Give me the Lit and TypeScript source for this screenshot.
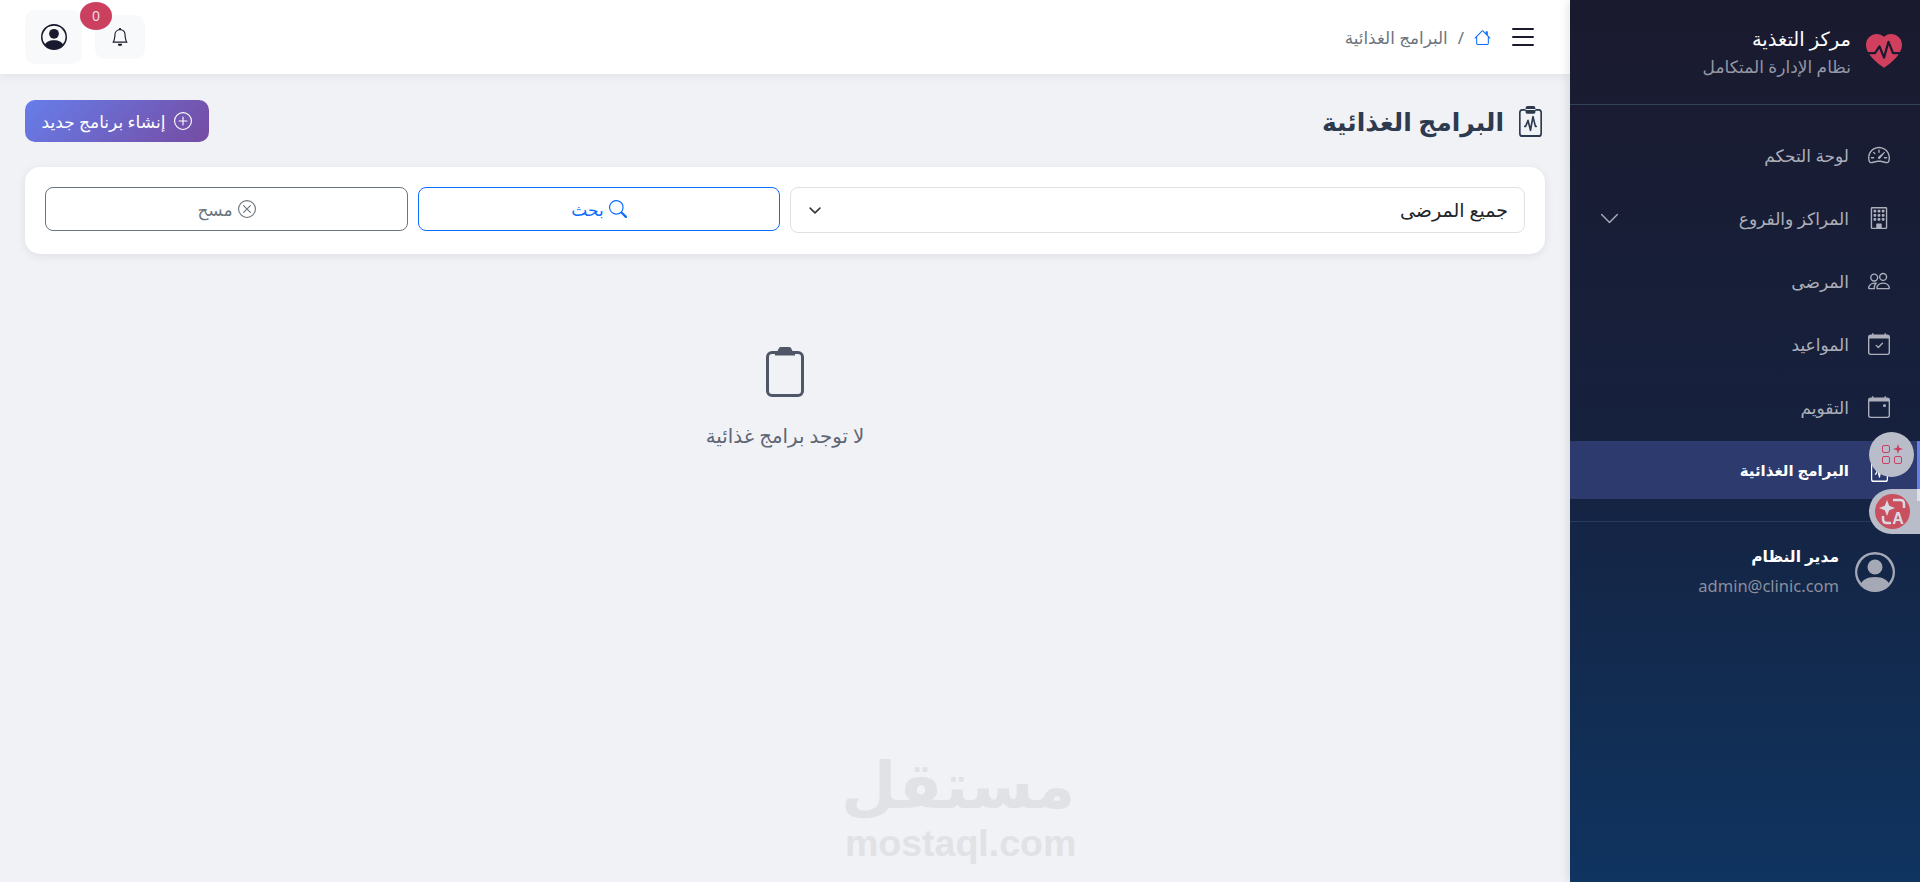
import { LitElement, html, css, svg, unsafeCSS } from "lit";
import { customElement } from "lit/decorators.js";

const icon = (paths: string[], cls = "") => html`<svg class="bi ${cls}" viewBox="0 0 16 16" fill="currentColor" aria-hidden="true">${paths.map((d) => svg`<path fill-rule="evenodd" d=${d}></path>`)}</svg>`;
const narrow = (paths: string[], cls = "") => html`<svg class="narrow ${cls}" viewBox="1 0 14 16" preserveAspectRatio="none" fill="currentColor" aria-hidden="true">${paths.map((d) => svg`<path fill-rule="evenodd" d=${d}></path>`)}</svg>`;

const FRAME = "M3.5 0a.5.5 0 0 1 .5.5V1h8V.5a.5.5 0 0 1 1 0V1h1a2 2 0 0 1 2 2v11a2 2 0 0 1-2 2H2a2 2 0 0 1-2-2V3a2 2 0 0 1 2-2h1V.5a.5.5 0 0 1 .5-.5M1 4v10a1 1 0 0 0 1 1h12a1 1 0 0 0 1-1V4z";
const I = {
  list: ["M2.5 12a.5.5 0 0 1 .5-.5h10a.5.5 0 0 1 0 1H3a.5.5 0 0 1-.5-.5m0-4a.5.5 0 0 1 .5-.5h10a.5.5 0 0 1 0 1H3a.5.5 0 0 1-.5-.5m0-4a.5.5 0 0 1 .5-.5h10a.5.5 0 0 1 0 1H3a.5.5 0 0 1-.5-.5"],
  person: ["M11 6a3 3 0 1 1-6 0 3 3 0 0 1 6 0", "M0 8a8 8 0 1 1 16 0A8 8 0 0 1 0 8m8-7a7 7 0 0 0-5.468 11.37C3.242 11.226 4.805 10 8 10s4.757 1.225 5.468 2.37A7 7 0 0 0 8 1"],
  bell: ["M8 16a2 2 0 0 0 2-2H6a2 2 0 0 0 2 2M8 1.918l-.797.161A4 4 0 0 0 4 6c0 .628-.134 2.197-.459 3.742-.16.767-.376 1.566-.663 2.258h10.244c-.287-.692-.502-1.49-.663-2.258C12.134 8.197 12 6.628 12 6a4 4 0 0 0-3.203-3.92zM14.22 12c.223.447.481.801.78 1H1c.299-.199.557-.553.78-1C2.68 10.2 3 6.88 3 6c0-2.42 1.72-4.44 4.005-4.901a1 1 0 1 1 1.99 0A5 5 0 0 1 13 6c0 .88.32 4.2 1.22 6"],
  house: ["M8.707 1.5a1 1 0 0 0-1.414 0L.646 8.146a.5.5 0 0 0 .708.708L2 8.207V13.5A1.5 1.5 0 0 0 3.5 15h9a1.5 1.5 0 0 0 1.5-1.5V8.207l.646.647a.5.5 0 0 0 .708-.708L13 5.793V2.5a.5.5 0 0 0-.5-.5h-1a.5.5 0 0 0-.5.5v1.293zM13 7.207V13.5a.5.5 0 0 1-.5.5h-9a.5.5 0 0 1-.5-.5V7.207l5-5z"],
  plus: ["M8 15A7 7 0 1 1 8 1a7 7 0 0 1 0 14m0 1A8 8 0 1 0 8 0a8 8 0 0 0 0 16", "M8 4a.5.5 0 0 1 .5.5v3h3a.5.5 0 0 1 0 1h-3v3a.5.5 0 0 1-1 0v-3h-3a.5.5 0 0 1 0-1h3v-3A.5.5 0 0 1 8 4"],
  search: ["M11.742 10.344a6.5 6.5 0 1 0-1.397 1.398h-.001q.044.06.098.115l3.85 3.85a1 1 0 0 0 1.415-1.414l-3.85-3.85a1 1 0 0 0-.115-.1zM12 6.5a5.5 5.5 0 1 1-11 0 5.5 5.5 0 0 1 11 0"],
  x: ["M8 15A7 7 0 1 1 8 1a7 7 0 0 1 0 14m0 1A8 8 0 1 0 8 0a8 8 0 0 0 0 16", "M4.646 4.646a.5.5 0 0 1 .708 0L8 7.293l2.646-2.647a.5.5 0 0 1 .708.708L8.707 8l2.647 2.646a.5.5 0 0 1-.708.708L8 8.707l-2.646 2.647a.5.5 0 0 1-.708-.708L7.293 8 4.646 5.354a.5.5 0 0 1 0-.708"],
  chevron: ["M1.646 4.646a.5.5 0 0 1 .708 0L8 10.293l5.646-5.647a.5.5 0 0 1 .708.708l-6 6a.5.5 0 0 1-.708 0l-6-6a.5.5 0 0 1 0-.708"],
  pulse: ["M5 1.5h6v1.6a.9.9 0 0 1-.9.9H5.900a.9.9 0 0 1-.9-.9zM6.200 0h3.600A1.200 1.200 0 0 1 11 1.200v.8H5v-.8A1.200 1.200 0 0 1 6.200 0M3 1.500h2v1H3a1 1 0 0 0-1 1V14a1 1 0 0 0 1 1h10a1 1 0 0 0 1-1V3.500a1 1 0 0 0-1-1h-2v-1h2a2 2 0 0 1 2 2V14a2 2 0 0 1-2 2H3a2 2 0 0 1-2-2V3.500a2 2 0 0 1 2-2", "M9.979 5.356a.5.5 0 0 0-.968.04L7.920 10.490l-.94-3.135a.5.5 0 0 0-.926-.08L4.690 10H4.500a.5.5 0 0 0 0 1H5a.5.5 0 0 0 .447-.276l.936-1.873 1.138 3.793a.5.5 0 0 0 .968-.04L9.580 7.510l.94 3.135A.5.5 0 0 0 11 11h.5a.5.5 0 0 0 0-1h-.128z"],
  speed: ["M8 4a.5.5 0 0 1 .5.5V6a.5.5 0 0 1-1 0V4.5A.5.5 0 0 1 8 4M3.732 5.732a.5.5 0 0 1 .707 0l.915.914a.5.5 0 1 1-.708.708l-.914-.915a.5.5 0 0 1 0-.707M2 10a.5.5 0 0 1 .5-.5h1.586a.5.5 0 0 1 0 1H2.500A.5.5 0 0 1 2 10m9.500 0a.5.5 0 0 1 .5-.5h1.500a.5.5 0 0 1 0 1H12a.5.5 0 0 1-.5-.5m.754-4.246a.39.39 0 0 0-.527-.02L7.547 9.310a.91.91 0 1 0 1.302 1.258l3.434-4.297a.39.39 0 0 0-.029-.518z", "M0 10a8 8 0 1 1 15.547 2.661c-.442 1.253-1.845 1.602-2.932 1.250C11.309 13.488 9.475 13 8 13c-1.474 0-3.310.488-4.615.911-1.087.352-2.490.003-2.932-1.250A8 8 0 0 1 0 10m8-7a7 7 0 0 0-6.603 9.329c.203.575.923.876 1.680.63C4.397 12.533 6.358 12 8 12s3.604.532 4.923.96c.757.245 1.477-.056 1.680-.631A7 7 0 0 0 8 3"],
  building: ["M4 2.5a.5.5 0 0 1 .5-.5h1a.5.5 0 0 1 .5.5v1a.5.5 0 0 1-.5.5h-1a.5.5 0 0 1-.5-.5zm3 0a.5.5 0 0 1 .5-.5h1a.5.5 0 0 1 .5.5v1a.5.5 0 0 1-.5.5h-1a.5.5 0 0 1-.5-.5zm3.500-.5a.5.5 0 0 0-.5.5v1a.5.5 0 0 0 .5.5h1a.5.5 0 0 0 .5-.5v-1a.5.5 0 0 0-.5-.5zM4 5.500a.5.5 0 0 1 .5-.5h1a.5.5 0 0 1 .5.5v1a.5.5 0 0 1-.5.5h-1a.5.5 0 0 1-.5-.5zM7.500 5a.5.5 0 0 0-.5.5v1a.5.5 0 0 0 .5.5h1a.5.5 0 0 0 .5-.5v-1a.5.5 0 0 0-.5-.5zm2.500.5a.5.5 0 0 1 .5-.5h1a.5.5 0 0 1 .5.5v1a.5.5 0 0 1-.5.5h-1a.5.5 0 0 1-.5-.5zM4.500 8a.5.5 0 0 0-.5.5v1a.5.5 0 0 0 .5.5h1a.5.5 0 0 0 .5-.5v-1a.5.5 0 0 0-.5-.5zm2.500.5a.5.5 0 0 1 .5-.5h1a.5.5 0 0 1 .5.5v1a.5.5 0 0 1-.5.5h-1a.5.5 0 0 1-.5-.5zm3.500-.5a.5.5 0 0 0-.5.5v1a.5.5 0 0 0 .5.5h1a.5.5 0 0 0 .5-.5v-1a.5.5 0 0 0-.5-.5z", "M2 1a1 1 0 0 1 1-1h10a1 1 0 0 1 1 1v14a1 1 0 0 1-1 1H3a1 1 0 0 1-1-1zm11 0H3v14h3v-2.500a.5.5 0 0 1 .5-.5h3a.5.5 0 0 1 .5.5V15h3z"],
  people: ["M15 14s1 0 1-1-1-4-5-4-5 3-5 4 1 1 1 1zm-7.978-1L7 12.996c.001-.264.167-1.030.76-1.720C8.312 10.629 9.282 10 11 10c1.717 0 2.687.63 3.240 1.276.593.69.758 1.457.76 1.720l-.008.002-.014.002zM11 7a2 2 0 1 0 0-4 2 2 0 0 0 0 4m3-2a3 3 0 1 1-6 0 3 3 0 0 1 6 0M6.936 9.280a6 6 0 0 0-1.230-.247A7 7 0 0 0 5 9c-4 0-5 3-5 4q0 1 1 1h4.216A2.240 2.240 0 0 1 5 13c0-1.010.377-2.042 1.090-2.904.243-.294.526-.569.846-.816M4.920 10A5.500 5.500 0 0 0 4 13H1c0-.26.164-1.030.76-1.724.545-.636 1.492-1.256 3.160-1.275ZM1.500 5.500a3 3 0 1 1 6 0 3 3 0 0 1-6 0m3-2a2 2 0 1 0 0 4 2 2 0 0 0 0-4"],
  calCheck: ["M10.854 7.146a.5.5 0 0 1 0 .708l-3 3a.5.5 0 0 1-.708 0l-1.500-1.500a.5.5 0 1 1 .708-.708L7.500 9.793l2.646-2.647a.5.5 0 0 1 .708 0", FRAME],
  calEvent: ["M11 6.500a.5.5 0 0 1 .5-.5h1a.5.5 0 0 1 .5.5v1a.5.5 0 0 1-.5.5h-1a.5.5 0 0 1-.5-.5z", FRAME],
  heart: ["M1.475 9C2.702 10.840 4.779 12.871 8 15c3.221-2.129 5.298-4.160 6.525-6H12a.5.5 0 0 1-.464-.314l-1.457-3.642-1.598 5.593a.5.5 0 0 1-.945.049L5.889 6.568l-1.473 2.210A.5.5 0 0 1 4 9z", "M.88 8C-2.427 1.680 4.410-2 7.823 1.143q.09.083.176.171a3 3 0 0 1 .176-.17C11.590-2 18.426 1.680 15.120 8h-2.783l-1.874-4.686a.5.5 0 0 0-.945.049L7.921 8.956 6.464 5.314a.5.5 0 0 0-.88-.091L3.732 8z"],
};

const CHEVRON_BG = unsafeCSS("url(\"data:image/svg+xml,%3csvg xmlns='http://www.w3.org/2000/svg' viewBox='0 0 16 16'%3e%3cpath fill='none' stroke='%23343a40' stroke-linecap='round' stroke-linejoin='round' stroke-width='2' d='m2 5 6 6 6-6'/%3e%3c/svg%3e\")");

const MENU = [
  { label: "لوحة التحكم", icon: I.speed },
  { label: "المراكز والفروع", icon: I.building, caret: true },
  { label: "المرضى", icon: I.people },
  { label: "المواعيد", icon: I.calCheck },
  { label: "التقويم", icon: I.calEvent },
  { label: "البرامج الغذائية", icon: I.pulse, active: true },
];

@customElement("app-root")
export class AppRoot extends LitElement {
  static styles = css`
    :host {
      display: block;
      height: 882px;
      overflow: hidden;
      font-family: "Noto Sans", "DejaVu Sans", sans-serif;
      background: #f0f2f5;
      color: #1a1a2e;
    }
    * { box-sizing: border-box; }
    .bi { display: block; flex: none; width: 1em; height: 1em; }
    .narrow { display: block; flex: none; }
    .app { position: relative; display: flex; height: 882px; direction: rtl; }

    .sidebar {
      flex: none;
      width: 350px;
      height: 882px;
      background: linear-gradient(180deg, #1a1a2e 0%, #16213e 50%, #0f3460 100%);
      color: #fff;
      box-shadow: -2px 0 10px rgba(0, 0, 0, 0.1);
      z-index: 2;
    }
    .brand {
      display: flex;
      align-items: center;
      gap: 15px;
      height: 105px;
      padding: 0 18px 0 0;
      border-bottom: 1px solid #33405a;
    }
    .brand .logo { font-size: 36px; color: #d0405e; }
    .brand h1 { margin: 0; font-size: 19.5px; line-height: 28px; font-weight: 500; color: #fff; }
    .brand p { margin: 1px 0 0; font-size: 17px; line-height: 26px; color: #9497a5; }
    .menu { display: flex; flex-direction: column; gap: 5px; padding: 21px 0 0; }
    .item {
      display: flex;
      align-items: center;
      height: 58px;
      padding: 0 30px 0 29px;
      gap: 19px;
      font-size: 17px;
      color: #adb0bb;
    }
    .item .ic { display: flex; justify-content: center; width: 22px; font-size: 22px; }
    .item .caret { margin-inline-start: auto; font-size: 21px; }
    .item .clip { width: 17px; height: 23px; }
    .item.active {
      background: #2d3a6e;
      color: #fff;
      font-weight: 700;
      font-size: 15px;
      border-inline-start: 3px solid #667eea;
      padding-right: 27px;
    }
    .divider { height: 1px; margin-top: 22px; background: #2a3a58; }
    .user { display: flex; align-items: flex-start; gap: 16px; padding: 19px 25px 0 0; }
    .user .avatar { margin-top: 11px; font-size: 40px; color: #a5a8b5; }
    .user .name { font-size: 15.5px; line-height: 30px; font-weight: 700; color: #fff; }
    .user .mail { margin-top: 1px; font-size: 16.5px; line-height: 28px; color: #8b8f9e; direction: ltr; text-align: right; }

    .main { position: relative; flex: 1; min-width: 0; height: 882px; background: #f0f2f5; }
    .topbar {
      display: flex;
      align-items: center;
      justify-content: space-between;
      height: 74px;
      padding: 0 36px 0 25px;
      background: #fff;
      box-shadow: 0 2px 10px rgba(0, 0, 0, 0.07);
    }
    .crumbs { display: flex; align-items: center; gap: 21px; }
    .burger { font-size: 32px; margin: 0 -5px; color: #1a1a2e; }
    .path { display: flex; align-items: center; gap: 10px; font-size: 16.8px; color: #6c757d; }
    .path .home { font-size: 17px; color: #0d6efd; }
    .tools { display: flex; align-items: center; gap: 13px; }
    .tool { position: relative; display: flex; align-items: center; justify-content: center; border-radius: 10px; background: #f8f9fa; }
    .tool.bell { width: 50px; height: 44px; font-size: 18px; }
    .tool.account { width: 57px; height: 54px; font-size: 26px; }
    .badge {
      position: absolute;
      top: -13px;
      right: 33px;
      width: 32px;
      height: 28px;
      border-radius: 50%;
      background: #cb3f5f;
      color: #f0dfe3;
      font-size: 14px;
      line-height: 28px;
      text-align: center;
      z-index: 1;
    }

    .content { padding: 26px 25px 0; }
    .head { display: flex; align-items: center; justify-content: space-between; height: 42px; }
    .title { display: flex; align-items: center; gap: 15px; margin: 0; font-size: 25px; font-weight: 700; color: #2d3a50; }
    .title .clip { width: 23px; height: 31px; margin-inline-start: 3px; }
    .create {
      display: flex;
      align-items: center;
      justify-content: center;
      gap: 9px;
      width: 184px;
      height: 42px;
      border: 0;
      border-radius: 10px;
      font: inherit;
      font-size: 17px;
      color: #fff;
      background: linear-gradient(135deg, #667eea 0%, #764ba2 100%);
    }
    .create .bi { font-size: 18px; }
    .filters {
      display: grid;
      grid-template-columns: 735fr 362fr 363fr;
      gap: 10px;
      align-items: start;
      margin-top: 25px;
      height: 87px;
      padding: 20px;
      border-radius: 15px;
      background: #fff;
      box-shadow: 0 2px 10px rgba(0, 0, 0, 0.08);
    }
    select {
      appearance: none;
      width: 100%;
      height: 46px;
      padding: 0 16px 0 36px;
      border: 1px solid #dee2e6;
      border-radius: 8px;
      font: inherit;
      font-size: 19px;
      color: #212529;
      background: #fff ${CHEVRON_BG} no-repeat left 15px center / 18px 13px;
    }
    .btn {
      display: flex;
      align-items: center;
      justify-content: center;
      gap: 5px;
      height: 44px;
      border: 1px solid;
      border-radius: 8px;
      background: #fff;
      font: inherit;
      font-size: 17px;
    }
    .btn .bi { font-size: 18px; }
    .btn.primary { color: #0d6efd; border-color: #0d6efd; }
    .btn.secondary { color: #6c757d; border-color: #6c757d; }

    .empty { display: flex; flex-direction: column; align-items: center; margin-top: 93px; color: #5f6675; }
    .empty svg { display: block; width: 38px; height: 50px; color: #4f5766; }
    .empty p { margin: 24px 0 0; font-size: 19.8px; line-height: 30px; }

    .mark {
      position: absolute;
      left: 845px;
      top: 748px;
      width: 230px;
      text-align: center;
      color: #e0e2e6;
      font-weight: 700;
      pointer-events: none;
    }
    .mark .ar { font-size: 64px; line-height: 77px; font-family: "DejaVu Sans", sans-serif; }
    .mark .en { font-size: 37.5px; line-height: 36px; font-family: "Liberation Sans", sans-serif; direction: ltr; }

    .fab { position: absolute; background: #b9bcc9; z-index: 3; }
    .fab.apps { left: 1869px; top: 432px; width: 45px; height: 45px; border-radius: 50%; }
    .fab.trans { left: 1869px; top: 489px; width: 51px; height: 45px; border-radius: 23px 0 0 23px; }
    .fab svg { position: absolute; display: block; }
    .fab.apps svg { left: 13px; top: 11px; width: 21px; height: 22px; }
    .fab.trans svg { left: 6px; top: 5px; width: 35px; height: 35px; }
    .edge { position: absolute; left: 1917px; top: 489px; width: 3px; height: 12px; background: #dfe1e8; z-index: 4; }
  `;

  render() {
    return html`
      <div class="app">
        <aside class="sidebar">
          <div class="brand">
            <span class="logo">${icon(I.heart)}</span>
            <div>
              <h1>مركز التغذية</h1>
              <p>نظام الإدارة المتكامل</p>
            </div>
          </div>
          <nav class="menu">
            ${MENU.map((m) => html`
              <div class="item ${m.active ? "active" : ""}">
                <span class="ic">${m.active ? narrow(m.icon, "clip") : icon(m.icon)}</span>
                <span>${m.label}</span>
                ${m.caret ? html`<span class="caret">${icon(I.chevron)}</span>` : ""}
              </div>`)}
          </nav>
          <div class="divider"></div>
          <div class="user">
            <span class="avatar">${icon(I.person)}</span>
            <div>
              <div class="name">مدير النظام</div>
              <div class="mail">admin@clinic.com</div>
            </div>
          </div>
        </aside>

        <main class="main">
          <header class="topbar">
            <div class="crumbs">
              <span class="burger">${icon(I.list)}</span>
              <div class="path">
                <span class="home">${icon(I.house)}</span>
                <span>/</span>
                <span>البرامج الغذائية</span>
              </div>
            </div>
            <div class="tools">
              <div class="tool bell">${icon(I.bell)}<span class="badge">0</span></div>
              <div class="tool account">${icon(I.person)}</div>
            </div>
          </header>
          <div class="content">
            <div class="head">
              <h2 class="title">${narrow(I.pulse, "clip")}<span>البرامج الغذائية</span></h2>
              <button class="create">${icon(I.plus)}<span>إنشاء برنامج جديد</span></button>
            </div>
            <div class="filters">
              <select><option>جميع المرضى</option></select>
              <button class="btn primary">${icon(I.search)}<span>بحث</span></button>
              <button class="btn secondary">${icon(I.x)}<span>مسح</span></button>
            </div>
            <div class="empty">
              <svg viewBox="0 0 38 50" fill="none" aria-hidden="true">
                <rect x="1.5" y="5.5" width="35" height="43" rx="4.5" stroke="currentColor" stroke-width="3"></rect>
                <path d="M9 8.500V6q0-2 2-2h.5L13 1q.5-1 2-1h8q1.500 0 2 1l1.500 3h.5q2 0 2 2v2.500z" fill="currentColor"></path>
              </svg>
              <p>لا توجد برامج غذائية</p>
            </div>
          </div>
          <div class="mark">
            <div class="ar">مستقل</div>
            <div class="en">mostaql.com</div>
          </div>
        </main>

        <div class="fab apps">
          <svg viewBox="0 0 21 22" fill="none" stroke="#cb3f5f" stroke-width="1">
            <rect x="0.5" y="2.5" width="7" height="7" rx="1.5"></rect>
            <rect x="0.5" y="13.5" width="7" height="7" rx="1.5"></rect>
            <rect x="12.5" y="13.5" width="7" height="7" rx="1.5"></rect>
            <path d="M16 1l1.200 3.800L21 6l-3.800 1.200L16 11l-1.200-3.800L11 6l3.800-1.200z" fill="#cb3f5f" stroke="none"></path>
          </svg>
        </div>
        <div class="fab trans">
          <svg viewBox="0 0 35 35">
            <circle cx="17.500" cy="17.500" r="17.500" fill="#c8505f"></circle>
            <path d="M12 6l2.200 5.800L20 14l-5.800 2.200L12 22l-2.200-5.800L4 14l5.800-2.200z" fill="#d9dbe3"></path>
            <path d="M18 6h7q4 0 4 4v4M8 22v3q0 4 4 4h4" fill="none" stroke="#d9dbe3" stroke-width="2.500"></path>
            <text x="23" y="30" text-anchor="middle" font-family="Liberation Sans" font-weight="700" font-size="16" fill="#d9dbe3">A</text>
          </svg>
        </div>
        <div class="edge"></div>
      </div>
    `;
  }
}
